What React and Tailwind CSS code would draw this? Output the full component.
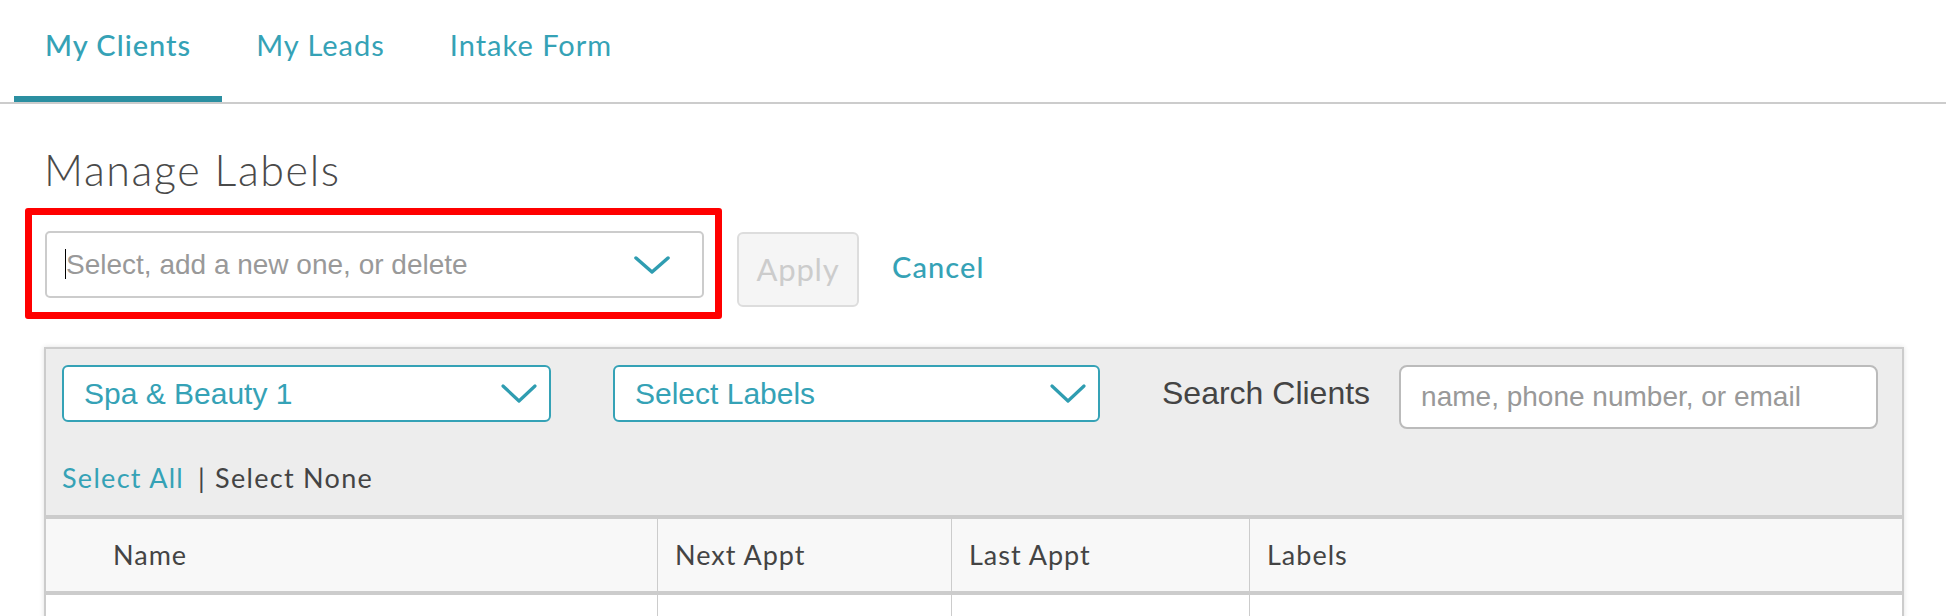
import React from 'react'

const TEAL = '#2f9db1'

function Chevron({ w = 36, h = 18, stroke = 3.5 }) {
  return (
    <svg width={w} height={h} viewBox={`0 0 ${w} ${h}`} fill="none">
      <polyline
        points={`2,2 ${w / 2},${h - 2} ${w - 2},2`}
        stroke={TEAL}
        strokeWidth={stroke}
        strokeLinecap="round"
        strokeLinejoin="round"
      />
    </svg>
  )
}

function Tabs() {
  const tabs = ['My Clients', 'My Leads', 'Intake Form']
  return (
    <div className="flex h-[104px] gap-[3px] border-b-2 border-[#cccccc] pl-[14px] font-['Lato',sans-serif]">
      {tabs.map((t, i) => (
        <div key={t} className="flex h-[102px] flex-col px-[31px]">
          <div
            className={`pt-[25px] text-[29px] leading-[40px] tracking-[1px] text-[#35a2b6] ${
              i === 0 ? 'font-medium' : 'font-normal'
            }`}
          >
            {t}
          </div>
          {i === 0 && <div className="-mx-[31px] mt-auto h-[6px] bg-[#2b8fa1]" />}
        </div>
      ))}
    </div>
  )
}

function Dropdown({ label, width }) {
  return (
    <div
      className="flex h-[57px] items-center justify-between rounded-[6px] border-2 border-[#35a2b6] bg-white pl-[20px] pr-[12px]"
      style={{ width }}
    >
      <span className="font-['Liberation_Sans',Arial,sans-serif] text-[30px] text-[#35a2b6]">
        {label}
      </span>
      <Chevron w={36} h={19} stroke={3.2} />
    </div>
  )
}

export default function App() {
  return (
    <div className="min-h-screen w-full bg-white">
      <Tabs />

      <div className="pl-[44px] pr-[42px]">
        <h1 className="mt-[40px] font-['Lato',sans-serif] text-[43px] font-light leading-[52px] tracking-[1.6px] text-[#4a4a4a]">
          Manage Labels
        </h1>

        {/* label selector row */}
        <div className="mt-[12px] flex items-start">
          <div className="-ml-[19px] rounded-[3px] border-[7px] border-[#ff0000] pb-[14px] pl-[13px] pr-[11px] pt-[16px]">
            <div className="relative flex h-[67px] w-[659px] items-center justify-between rounded-[5px] border-2 border-[#cccccc] bg-white pl-[19px] pr-[32px]">
              <span className="absolute left-[18px] top-[16px] h-[30px] w-px bg-black" />
              <span className="font-['Liberation_Sans',Arial,sans-serif] text-[28px] text-[#999999]">
                Select, add a new one, or delete
              </span>
              <Chevron w={36} h={18} stroke={3.5} />
            </div>
          </div>
          <div className="ml-[15px] mt-[24px] flex h-[75px] w-[122px] items-center justify-center rounded-[6px] border-2 border-[#dddddd] bg-[#f5f5f5] font-['Lato',sans-serif] text-[31px] tracking-[0.8px] text-[#cccccc]">
            Apply
          </div>
          <div className="ml-[33px] mt-[39px] font-['Lato',sans-serif] text-[29px] font-medium leading-[40px] tracking-[1.1px] text-[#35a2b6]">
            Cancel
          </div>
        </div>

        {/* clients panel */}
        <div className="mt-[28px] border-x-2 border-t-2 border-[#cccccc] bg-[#ededed] shadow-[0_0_5px_rgba(0,0,0,0.12)]">
          <div className="px-[16px] pb-[21px] pt-[16px]">
            <div className="flex items-start">
              <Dropdown label="Spa & Beauty 1" width={489} />
              <div className="ml-[62px]">
                <Dropdown label="Select Labels" width={487} />
              </div>
              <div className="ml-[62px] font-['Liberation_Sans',Arial,sans-serif] text-[32px] leading-[57px] text-[#444444]">
                Search Clients
              </div>
              <div className="ml-[29px] flex h-[64px] w-[479px] items-center rounded-[8px] border-2 border-[#bbbbbb] bg-white pl-[20px]">
                <span className="font-['Liberation_Sans',Arial,sans-serif] text-[28px] text-[#999999]">
                  name, phone number, or email
                </span>
              </div>
            </div>
            <div className="mt-[33px] flex font-['Lato',sans-serif] text-[27px] leading-[32px] tracking-[1.3px]">
              <span className="text-[#35a2b6]">Select All</span>
              <span className="ml-[14px] text-[#444444]">|</span>
              <span className="ml-[9px] text-[#444444]">Select None</span>
            </div>
          </div>

          <div className="border-y-4 border-[#cccccc] bg-[#f8f8f8]">
            <div className="grid h-[72px] grid-cols-[612px_294px_298px_1fr] font-['Lato',sans-serif] text-[27px] tracking-[1px] text-[#444444]">
              <div className="flex items-center border-r border-[#cccccc] pl-[67px]">Name</div>
              <div className="flex items-center border-r border-[#cccccc] pl-[17px]">Next Appt</div>
              <div className="flex items-center border-r border-[#cccccc] pl-[17px]">Last Appt</div>
              <div className="flex items-center pl-[17px]">Labels</div>
            </div>
          </div>
          <div className="grid h-[60px] grid-cols-[612px_294px_298px_1fr] bg-white">
            <div className="border-r border-[#cccccc]" />
            <div className="border-r border-[#cccccc]" />
            <div className="border-r border-[#cccccc]" />
            <div />
          </div>
        </div>
      </div>
    </div>
  )
}
